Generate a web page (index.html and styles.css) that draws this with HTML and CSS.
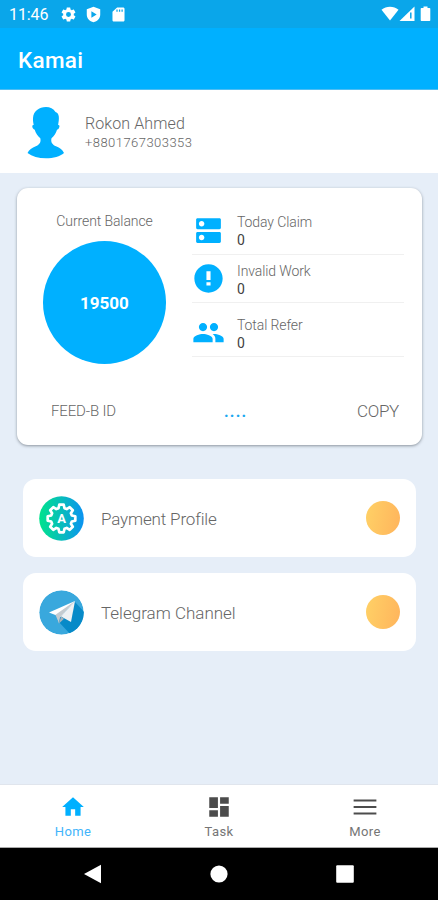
FILE: index.html
```html
<!DOCTYPE html>
<html lang="en">
<head>
<meta charset="utf-8">
<meta name="viewport" content="width=device-width, initial-scale=1">
<title>Kamai</title>
<link rel="stylesheet" href="styles.css">
</head>
<body>
<div class="status">
  <span class="time">11:46</span>
  <svg class="st-icon" viewBox="0 0 24 24"><path fill-rule="evenodd" d="M19.43 12.98c.04-.32.07-.64.07-.98s-.03-.66-.07-.98l2.11-1.65c.19-.15.24-.42.12-.64l-2-3.46c-.12-.22-.39-.3-.61-.22l-2.49 1c-.52-.4-1.08-.73-1.69-.98l-.38-2.65C14.46 2.18 14.25 2 14 2h-4c-.25 0-.46.18-.49.42l-.38 2.65c-.61.25-1.17.59-1.69.98l-2.49-1c-.23-.09-.49 0-.61.22l-2 3.46c-.13.22-.07.49.12.64l2.11 1.65c-.04.32-.07.65-.07.98s.03.66.07.98l-2.11 1.65c-.19.15-.24.42-.12.64l2 3.46c.12.22.39.3.61.22l2.49-1c.52.4 1.08.73 1.69.98l.38 2.65c.03.24.24.42.49.42h4c.25 0 .46-.18.49-.42l.38-2.65c.61-.25 1.17-.59 1.69-.98l2.49 1c.23.09.49 0 .61-.22l2-3.46c.12-.22.07-.49-.12-.64l-2.11-1.65zM12 15.500a3.500 3.500 0 1 1 0-7 3.500 3.500 0 0 1 0 7z"/></svg>
  <svg class="st-icon" viewBox="0 0 24 24"><path fill-rule="evenodd" d="M12 1 2.500 4.500V12c0 5.500 4 9.700 9.500 11 5.500-1.300 9.500-5.500 9.500-11V4.500zM9 7.500l7.500 4.500L9 16.500z"/></svg>
  <svg class="st-icon" viewBox="0 0 24 24"><path fill-rule="evenodd" d="M18.500 2H10L3.500 8v12c0 1.100.9 2 2 2h13c1.100 0 2-.9 2-2V4c0-1.100-.9-2-2-2zM9 5h1.800v3H9zm3.600 0h1.800v3h-1.800zm3.600 0H18v3h-1.800z"/></svg>
  <svg class="signals" viewBox="0 0 52 18"><path d="M.5 4.800C5.200.8 12.800.8 17.500 4.800L9 15.500z"/><path d="M18.500 16 33.500 1.500V16z"/><path class="mark" d="M29.800 7.500v6"/><path d="M40.500 3h2V1.500h4V3h2q.8 0 .8.800v11.400q0 .8-.8.800h-8q-.8 0-.8-.8V3.800q0-.8.8-.8z"/></svg>
</div>
<header class="appbar">Kamai</header>
<section class="profile">
  <svg class="avatar" viewBox="0 0 38 54"><path d="M19 1C12 1 6.500 5 6 12c-.2 3 .4 5 .7 7-1.700-.2-1.700 1.800-.8 3.300.5.900 1.300 1.300 1.800 1.400 1 3.400 3.100 6.500 5.600 8.600 1 4-1 6.500-4.500 8C5 42 2 43.500.5 47c4.500 3.500 11 5.300 18.500 5.300S33 50.500 37 47c-1.500-3.500-4-5-8-6.700-3.500-1.500-5.500-4-4.500-8 2.600-2.100 4.500-5.200 5.500-8.600.7-.1 1.500-.7 2-1.700.8-1.700.7-3.200-.9-3 .5-3 1-5.600.7-8.400C31.600 7.500 29.800 6.500 28.500 6 26.500 2.500 23 1 19 1z"/></svg>
  <div class="who"><div class="name">Rokon Ahmed</div><div class="phone">+8801767303353</div></div>
</section>
<main class="content">
  <section class="summary">
    <div class="top">
      <div class="balance"><div class="label">Current Balance</div><div class="disc">19500</div></div>
      <div class="stats">
        <div class="stat">
          <svg viewBox="0 0 24 24"><path fill-rule="evenodd" d="M20 13H4c-.55 0-1 .45-1 1v6c0 .55.45 1 1 1h16c.55 0 1-.45 1-1v-6c0-.55-.45-1-1-1zM7 19c-1.100 0-2-.9-2-2s.9-2 2-2 2 .9 2 2-.9 2-2 2zM20 3H4c-.55 0-1 .45-1 1v6c0 .55.45 1 1 1h16c.55 0 1-.45 1-1V4c0-.55-.45-1-1-1zM7 9c-1.100 0-2-.9-2-2s.9-2 2-2 2 .9 2 2-.9 2-2 2z"/></svg>
          <div><div class="label">Today Claim</div><div class="value">0</div></div>
        </div>
        <div class="stat invalid">
          <svg viewBox="0 0 24 24"><path d="M12 1.700C6.300 1.700 1.700 6.300 1.700 12S6.300 22.300 12 22.300 22.300 17.700 22.300 12 17.700 1.700 12 1.700zm1.500 15.300h-3v-2.300h3V17zm0-4h-3V6.800h3v6.200z"/></svg>
          <div><div class="label">Invalid Work</div><div class="value">0</div></div>
        </div>
        <div class="stat refer">
          <svg viewBox="0 0 24 24"><path d="M16 11c1.660 0 2.990-1.340 2.990-3S17.660 5 16 5s-3 1.340-3 3 1.340 3 3 3zm-8 0c1.660 0 2.990-1.340 2.990-3S9.660 5 8 5 5 6.340 5 8s1.340 3 3 3zm0 2c-2.330 0-7 1.170-7 3.500V19h14v-2.500c0-2.330-4.670-3.500-7-3.500zm8 0c-.29 0-.62.020-.97.050 1.160.84 1.970 1.970 1.970 3.450V19h6v-2.500c0-2.330-4.670-3.500-7-3.500z"/></svg>
          <div><div class="label">Total Refer</div><div class="value">0</div></div>
        </div>
      </div>
    </div>
    <div class="feed"><span class="feed-id">FEED-B ID</span><span class="dots">....</span><span class="copy">COPY</span></div>
  </section>
  <section class="row">
    <svg class="row-icon" viewBox="-22.500 -22.500 45 45">
      <defs><linearGradient id="teal"><stop offset="0" stop-color="#00e38c"/><stop offset=".5" stop-color="#08bdbb"/><stop offset="1" stop-color="#0b92f2"/></linearGradient></defs>
      <circle r="22.300" fill="url(#teal)"/>
      <path class="gear" d="M10.300-3 13.800-2.200V2.200L10.300 3 9.400 5.200 11.300 8.200 8.200 11.300 5.200 9.400 3 10.300 2.200 13.800H-2.200L-3 10.300-5.200 9.400-8.200 11.300-11.300 8.200-9.400 5.200-10.300 3-13.800 2.200V-2.200L-10.300-3-9.400-5.200-11.300-8.200-8.200-11.300-5.200-9.400-3-10.300-2.200-13.800H2.200L3-10.300 5.200-9.400 8.200-11.300 11.300-8.200 9.400-5.200z"/>
      <text class="gear-letter" y="4.500">A</text>
    </svg>
    <span class="pay">Payment Profile</span><i class="dot"></i>
  </section>
  <section class="row">
    <svg class="row-icon" viewBox="-22.500 -22.500 45 45">
      <clipPath id="round"><circle r="22.300"/></clipPath>
      <g clip-path="url(#round)"><circle r="22.300" fill="#39a8dd"/><path fill="#078ac8" d="M13-11 26 3 24 24H11L-4 8z"/></g>
      <path fill="#fff" d="M-12.500 0 13.500-11.500-1 4.500z"/><path fill="#c4cbd0" d="M-6 2.200 13.500-11.500-1.500 5-2.500 11z"/><path fill="#eef1f3" d="M-.5 4 13.500-11.500 9.500 9.500z"/><path fill="#a9b3ba" d="M-.5 4 2.500 6.200-2.500 11z"/>
    </svg>
    <span>Telegram Channel</span><i class="dot"></i>
  </section>
</main>
<nav class="tabs">
  <div class="tab active"><svg viewBox="0 0 24 24"><path d="M10 20v-6h4v6h5v-8h3L12 3 2 12h3v8z"/></svg><span>Home</span></div>
  <div class="tab"><svg viewBox="0 0 24 24"><path d="M3 13h8V3H3v10zm0 8h8v-6H3v6zm10 0h8V11h-8v10zm0-18v6h8V3h-8z"/></svg><span>Task</span></div>
  <div class="tab"><svg viewBox="0 0 24 24"><path d="M1.500 5h21v2h-21zM1.500 11h21v2h-21zM1.500 17h21v2h-21z"/></svg><span>More</span></div>
</nav>
<footer class="system">
  <svg viewBox="0 0 18 20"><path d="M0 10 17 .8v18.400z"/></svg>
  <svg viewBox="0 0 18 20"><circle cx="9" cy="10" r="8.600"/></svg>
  <svg viewBox="0 0 18 20"><rect x=".2" y="1.200" width="17.600" height="17.600" rx="1"/></svg>
</footer>
</body>
</html>
```
FILE: styles.css
```css
* { box-sizing: border-box; }
body {
  margin: 0;
  width: 438px;
  height: 900px;
  display: flex;
  flex-direction: column;
  overflow: hidden;
  background: #e6eef8;
  color: #666;
  font-family: Roboto, sans-serif;
  font-weight: 300;
}
svg { display: block; flex: none; }

.status {
  height: 28px;
  flex: none;
  display: flex;
  align-items: center;
  padding: 0 6px 0 9px;
  background: #0aa6ea;
  color: #fff;
  fill: #fff;
}
.time { width: 51px; font-size: 16px; font-weight: 400; line-height: 28px; letter-spacing: -.1px; padding-top: 1px; }
.st-icon { width: 17px; height: 17px; margin-right: 8px; }
.signals { width: 52px; height: 18px; margin-left: auto; margin-right: -1px; }
.mark { stroke: #0aa6ea; stroke-width: 1.5; }

.appbar {
  height: 62px;
  flex: none;
  padding-left: 18px;
  border-bottom: 1px solid #50bdf2;
  background: #00b0ff;
  color: #fff;
  font-size: 22.5px;
  font-weight: 500;
  line-height: 64px;
  letter-spacing: .3px;
}
.profile { height: 83px; flex: none; display: flex; background: #fff; padding: 16px 0 0 27px; }
.avatar { width: 38px; height: 54px; fill: #00b0ff; }
.who { padding: 8px 0 0 20px; }
.name { font-size: 16px; line-height: 19px; letter-spacing: .1px; }
.phone { font-size: 13px; line-height: 19px; letter-spacing: .45px; }

.content { flex: 1; padding: 15px 16px 0 17px; }
.summary {
  width: 405px;
  height: 257px;
  border-radius: 11px;
  background: #fff;
  box-shadow: 0 1px 3px rgba(50, 60, 70, .5);
}
.top { display: flex; height: 203px; padding-top: 24px; }
.balance { width: 175px; display: flex; flex-direction: column; align-items: center; }
.label { font-size: 14px; line-height: 18px; letter-spacing: -.1px; }
.disc {
  width: 123px;
  height: 123px;
  margin-top: 11px;
  border-radius: 50%;
  background: #00b0ff;
  color: #fff;
  font-size: 17px;
  font-weight: 700;
  line-height: 124px;
  text-align: center;
}
.stats { width: 212px; }
.stat { height: 43px; display: flex; gap: 12px; border-bottom: 1px solid #f0f0f0; }
.stat svg { width: 33px; height: 33px; fill: #00b0ff; margin: 2px 0 0; }
.stat .label { padding-top: 1px; }
.value { color: #424242; font-size: 14px; line-height: 18px; font-weight: 400; }
.invalid { height: 48px; padding-top: 6px; }
.invalid svg { margin-top: 1px; }
.refer { height: 54px; padding-top: 12px; }
.refer svg { margin-top: 1px; }
.feed { display: flex; align-items: center; height: 40px; padding: 0 23px 0 34px; }
.feed-id { width: 173px; font-size: 15px; letter-spacing: -.15px; }
.dots { color: #1ba8f0; font-size: 16px; font-weight: 700; letter-spacing: 1.200px; }
.copy { margin-left: auto; font-size: 17px; letter-spacing: -.3px; }

.row {
  width: 393px;
  height: 78px;
  margin: 0 0 16px 6px;
  padding: 0 16px;
  display: flex;
  align-items: center;
  background: #fff;
  border-radius: 13px;
  font-size: 17px;
}
.summary + .row { margin-top: 34px; }
.row-icon { width: 45px; height: 45px; margin-right: 17px; }
.row span { padding-top: 1px; }
.row .pay { letter-spacing: -.15px; }
.gear { fill: none; stroke: #fff; stroke-width: 2.700; stroke-linejoin: round; }
.gear-letter { fill: #fff; font-size: 13px; font-weight: 700; text-anchor: middle; letter-spacing: 0; }
.dot { width: 34px; height: 34px; margin-left: auto; border-radius: 50%; background: linear-gradient(100deg, #ffd166, #ffb45c); }

.tabs { height: 64px; flex: none; display: grid; grid-template-columns: repeat(3, 1fr); background: #fff; border-top: 1px solid #e0e5ed; border-bottom: 1px solid #aaa; }
.tab { display: flex; flex-direction: column; align-items: center; padding-top: 9px; font-size: 13px; font-weight: 400; line-height: 17px; letter-spacing: .4px; color: #757575; }
.tab svg { width: 26px; height: 26px; fill: #4c4c4c; margin-bottom: 3px; }
.active { color: #42b4fb; }
.active svg { fill: #00b0ff; }
.system { height: 52px; flex: none; display: flex; justify-content: center; align-items: center; gap: 108px; background: #000; fill: #fff; }
.system svg { width: 18px; height: 20px; }
```
